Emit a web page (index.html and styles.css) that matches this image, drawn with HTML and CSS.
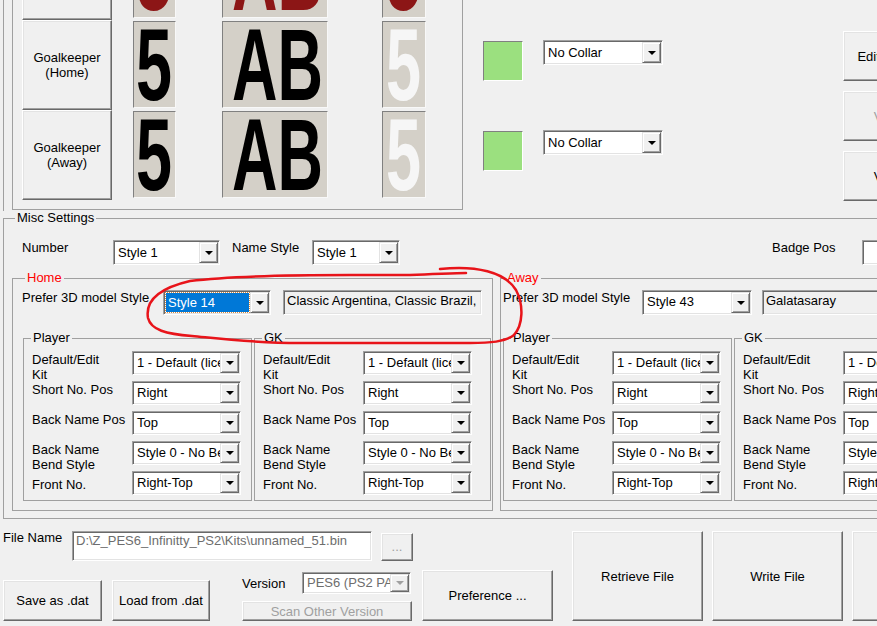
FILE: index.html
```html
<!DOCTYPE html>
<html lang="en">
<head>
  <meta charset="UTF-8">
  <title>Kit Editor</title>
  <link rel="stylesheet" href="styles.css">
</head>
<body>
  <div class="kits">
    <div class="kits-frame">
      <div class="preview">
        <div class="kit-row prev">
          <button class="btn kit-btn">Player<br>(Away)</button>
          <div class="box box-num"><svg width="41" height="85"><text x="2" y="78" textLength="36" lengthAdjust="spacingAndGlyphs">5</text></svg></div>
          <div class="box box-name"><svg width="104" height="85"><text x="9" y="78" textLength="91" lengthAdjust="spacingAndGlyphs">AB</text></svg></div>
          <div class="box box-back"><svg width="42" height="85"><text x="3" y="78" textLength="35" lengthAdjust="spacingAndGlyphs">5</text></svg></div>
        </div>
        <div class="kit-row">
          <button class="btn kit-btn">Goalkeeper<br>(Home)</button>
          <div class="box box-num"><svg width="41" height="85"><text x="2" y="78" textLength="36" lengthAdjust="spacingAndGlyphs">5</text></svg></div>
          <div class="box box-name"><svg width="104" height="85"><text x="9" y="78" textLength="91" lengthAdjust="spacingAndGlyphs">AB</text></svg></div>
          <div class="box box-back white"><svg width="42" height="85"><text x="3" y="78" textLength="35" lengthAdjust="spacingAndGlyphs">5</text></svg></div>
        </div>
        <div class="kit-row">
          <button class="btn kit-btn">Goalkeeper<br>(Away)</button>
          <div class="box box-num"><svg width="41" height="85"><text x="2" y="78" textLength="36" lengthAdjust="spacingAndGlyphs">5</text></svg></div>
          <div class="box box-name"><svg width="104" height="85"><text x="9" y="78" textLength="91" lengthAdjust="spacingAndGlyphs">AB</text></svg></div>
          <div class="box box-back white"><svg width="42" height="85"><text x="3" y="78" textLength="35" lengthAdjust="spacingAndGlyphs">5</text></svg></div>
        </div>
      </div>

      <div class="collars">
        <div class="collar-row">
          <div class="swatch"></div>
          <div class="combo"><span class="combo-text">No Collar</span><span class="combo-btn"></span></div>
        </div>
        <div class="collar-row">
          <div class="swatch"></div>
          <div class="combo"><span class="combo-text">No Collar</span><span class="combo-btn"></span></div>
        </div>
      </div>

      <div class="side-btns">
        <button class="btn">Edit Kit</button>
        <button class="btn off">V</button>
        <button class="btn">V</button>
      </div>
    </div>
  </div>

  <fieldset class="group misc">
    <legend>Misc Settings</legend>
    <div class="misc-row">
      <span class="lbl-number">Number</span>
      <div class="combo w-number"><span class="combo-text">Style 1</span><span class="combo-btn"></span></div>
      <span class="lbl-name">Name Style</span>
      <div class="combo w-name"><span class="combo-text">Style 1</span><span class="combo-btn"></span></div>
      <span class="lbl-badge">Badge Pos</span>
      <div class="combo w-badge"><span class="combo-text"></span></div>
    </div>

    <div class="sides">
      <fieldset class="group home">
        <legend>Home</legend>
        <div class="style-row">
          <span class="style-lbl">Prefer 3D model Style</span>
          <div class="combo w-style"><span class="combo-text sel">Style 14</span><span class="combo-btn"></span></div>
          <div class="field w-teams">Classic Argentina, Classic Brazil,</div>
        </div>
        <div class="players">
          <fieldset class="group sub sub-player">
            <legend>Player</legend>
            <div class="opt-row"><span class="opt-lbl">Default/Edit<br>Kit</span><div class="combo"><span class="combo-text">1 - Default (licensed)</span><span class="combo-btn"></span></div></div>
            <div class="opt-row"><span class="opt-lbl">Short No. Pos</span><div class="combo"><span class="combo-text">Right</span><span class="combo-btn"></span></div></div>
            <div class="opt-row"><span class="opt-lbl">Back Name Pos</span><div class="combo"><span class="combo-text">Top</span><span class="combo-btn"></span></div></div>
            <div class="opt-row"><span class="opt-lbl">Back Name<br>Bend Style</span><div class="combo"><span class="combo-text">Style 0 - No Bend</span><span class="combo-btn"></span></div></div>
            <div class="opt-row"><span class="opt-lbl low">Front No.</span><div class="combo"><span class="combo-text">Right-Top</span><span class="combo-btn"></span></div></div>
          </fieldset>
          <fieldset class="group sub sub-gk">
            <legend>GK</legend>
            <div class="opt-row"><span class="opt-lbl">Default/Edit<br>Kit</span><div class="combo"><span class="combo-text">1 - Default (licensed)</span><span class="combo-btn"></span></div></div>
            <div class="opt-row"><span class="opt-lbl">Short No. Pos</span><div class="combo"><span class="combo-text">Right</span><span class="combo-btn"></span></div></div>
            <div class="opt-row"><span class="opt-lbl">Back Name Pos</span><div class="combo"><span class="combo-text">Top</span><span class="combo-btn"></span></div></div>
            <div class="opt-row"><span class="opt-lbl">Back Name<br>Bend Style</span><div class="combo"><span class="combo-text">Style 0 - No Bend</span><span class="combo-btn"></span></div></div>
            <div class="opt-row"><span class="opt-lbl low">Front No.</span><div class="combo"><span class="combo-text">Right-Top</span><span class="combo-btn"></span></div></div>
          </fieldset>
        </div>
      </fieldset>

      <fieldset class="group away">
        <legend>Away</legend>
        <div class="style-row">
          <span class="style-lbl">Prefer 3D model Style</span>
          <div class="combo w-style"><span class="combo-text">Style 43</span><span class="combo-btn"></span></div>
          <div class="field w-teams">Galatasaray</div>
        </div>
        <div class="players">
          <fieldset class="group sub sub-player">
            <legend>Player</legend>
            <div class="opt-row"><span class="opt-lbl">Default/Edit<br>Kit</span><div class="combo"><span class="combo-text">1 - Default (licensed)</span><span class="combo-btn"></span></div></div>
            <div class="opt-row"><span class="opt-lbl">Short No. Pos</span><div class="combo"><span class="combo-text">Right</span><span class="combo-btn"></span></div></div>
            <div class="opt-row"><span class="opt-lbl">Back Name Pos</span><div class="combo"><span class="combo-text">Top</span><span class="combo-btn"></span></div></div>
            <div class="opt-row"><span class="opt-lbl">Back Name<br>Bend Style</span><div class="combo"><span class="combo-text">Style 0 - No Bend</span><span class="combo-btn"></span></div></div>
            <div class="opt-row"><span class="opt-lbl low">Front No.</span><div class="combo"><span class="combo-text">Right-Top</span><span class="combo-btn"></span></div></div>
          </fieldset>
          <fieldset class="group sub sub-gk">
            <legend>GK</legend>
            <div class="opt-row"><span class="opt-lbl">Default/Edit<br>Kit</span><div class="combo"><span class="combo-text">1 - Default (licensed)</span><span class="combo-btn"></span></div></div>
            <div class="opt-row"><span class="opt-lbl">Short No. Pos</span><div class="combo"><span class="combo-text">Right</span><span class="combo-btn"></span></div></div>
            <div class="opt-row"><span class="opt-lbl">Back Name Pos</span><div class="combo"><span class="combo-text">Top</span><span class="combo-btn"></span></div></div>
            <div class="opt-row"><span class="opt-lbl">Back Name<br>Bend Style</span><div class="combo"><span class="combo-text">Style 0 - No Bend</span><span class="combo-btn"></span></div></div>
            <div class="opt-row"><span class="opt-lbl low">Front No.</span><div class="combo"><span class="combo-text">Right-Top</span><span class="combo-btn"></span></div></div>
          </fieldset>
        </div>
      </fieldset>
    </div>
  </fieldset>

  <div class="bottom">
    <div class="file-col">
      <div class="file-row">
        <span class="file-lbl">File Name</span>
        <div class="file-field">D:\Z_PES6_Infinitty_PS2\Kits\unnamed_51.bin</div>
        <button class="btn off dots-btn">...</button>
      </div>
      <div class="act-row">
        <button class="btn save-btn">Save as .dat</button>
        <button class="btn load-btn">Load from .dat</button>
        <div class="ver">
          <div class="ver-row">
            <span class="ver-lbl">Version</span>
            <div class="combo off"><span class="combo-text">PES6 (PS2 PAL)</span><span class="combo-btn"></span></div>
          </div>
          <button class="btn off scan-btn">Scan Other Version</button>
        </div>
      </div>
    </div>
    <button class="btn pref-btn">Preference ...</button>
    <button class="btn big-btn first">Retrieve File</button>
    <button class="btn big-btn">Write File</button>
    <button class="btn big-btn">Close</button>
  </div>

  <!-- red hand-drawn mark over the screenshot -->
  <svg class="mark" width="877" height="626">
    <path d="M440,269 C476,265 505,272 516,290 C524,305 523,325 514,335 C505,342 490,343 470,343 L300,343 C252,343 222,339 192,336 C166,334 151,330 148,318 C145,300 160,288 190,281 C230,276 300,275 350,275 L410,275 C440,274 455,273 466,273"/>
  </svg>
</body>
</html>
```

FILE: styles.css
```css
* {
  box-sizing: border-box;
}

body {
  margin: 0;
  width: 877px;
  height: 626px;
  overflow: hidden;
  position: relative;
  background: #f0f0f0;
  color: #000;
  font: 13px/15px "Liberation Sans", Arial, sans-serif;
}

/* classic raised button */
.btn {
  font: inherit;
  color: #000;
  background: #f0f0f0;
  border: 1px solid;
  border-color: #fff #696969 #696969 #fff;
  box-shadow: inset -1px -1px #a0a0a0, inset 1px 1px #e3e3e3;
  padding: 0;
  display: flex;
  align-items: center;
  justify-content: center;
  text-align: center;
  flex-shrink: 0;
  white-space: nowrap;
}

.btn.off {
  color: #a0a0a0;
}

/* combo box */
.combo {
  display: flex;
  background: #fff;
  border: 1px solid;
  border-color: #a0a0a0 #fff #fff #a0a0a0;
  box-shadow: inset 1px 1px #696969, inset -1px -1px #e3e3e3;
  padding: 1px;
  flex-shrink: 0;
  width: 109px;
  height: 24px;
}

.combo-text {
  flex: 1;
  min-width: 0;
  padding-left: 3px;
  overflow: hidden;
  white-space: nowrap;
  line-height: 20px;
}

.combo-text.sel {
  margin: 1px;
  padding-left: 2px;
  background: #0078d7;
  color: #fff;
  line-height: 19px;
  outline: 1px dotted #d8883a;
}

.combo-btn {
  width: 19px;
  flex-shrink: 0;
  background: #f0f0f0;
  border: 1px solid;
  border-color: #e3e3e3 #696969 #696969 #e3e3e3;
  box-shadow: inset 1px 1px #fff, inset -1px -1px #a0a0a0;
  display: flex;
  align-items: center;
  justify-content: center;
}

.combo-btn::after {
  content: "";
  border-left: 4px solid transparent;
  border-right: 4px solid transparent;
  border-top: 4px solid #000;
}

.combo.off .combo-text {
  color: #6d6d6d;
}

.combo.off .combo-btn::after {
  border-top-color: #a0a0a0;
}

.field {
  height: 25px;
  flex-shrink: 0;
  background: #f0f0f0;
  border: 1px solid;
  border-color: #a0a0a0 #fff #fff #a0a0a0;
  box-shadow: inset 1px 1px #696969, inset -1px -1px #e3e3e3;
  padding-left: 3px;
  line-height: 19px;
  white-space: nowrap;
  overflow: hidden;
}

/* top kit preview */
.kits {
  height: 211px;
  display: flex;
  padding-left: 3px;
  overflow: hidden;
}

.kits-frame {
  flex: 1;
  display: flex;
  align-items: flex-start;
  height: 212px;
  border-left: 1px solid #a0a0a0;
  padding-left: 8px;
}

.kits-frame > * {
  flex-shrink: 0;
}

.preview {
  width: 451px;
  height: 210px;
  border: 1px solid #a0a0a0;
  border-top: 0;
  display: flex;
  flex-direction: column;
  justify-content: flex-end;
  padding: 0 0 9px 9px;
  overflow: hidden;
}

.kit-row {
  display: flex;
  align-items: flex-start;
  height: 90px;
  flex-shrink: 0;
}

.kit-btn {
  width: 90px;
  height: 90px;
  white-space: normal;
}

.box {
  margin-top: 1px;
  height: 87px;
  flex-shrink: 0;
  background: #d4d0c8;
  border: 1px solid;
  border-color: #808080 #f8f8f8 #f8f8f8 #808080;
}

.box svg {
  display: block;
}

.box text {
  font: bold 102px "Liberation Sans", Arial, sans-serif;
  fill: #000;
}

.box.white text {
  fill: #f6f6f6;
}

.prev .box text {
  fill: #8c1616;
}

.box-num {
  margin-left: 21px;
  width: 43px;
}

.box-name {
  margin-left: 46px;
  width: 106px;
}

.box-back {
  margin-left: 54px;
  width: 44px;
}

.collars {
  margin-left: 20px;
  padding-top: 40px;
  display: flex;
  flex-direction: column;
}

.collar-row {
  display: flex;
  align-items: flex-start;
  height: 90px;
}

.swatch {
  width: 40px;
  height: 40px;
  margin-top: 1px;
  flex-shrink: 0;
  background: #9be07f;
  border: 1px solid;
  border-color: #808080 #fff #fff #808080;
}

.collar-row .combo {
  margin-left: 20px;
  width: 120px;
  height: 25px;
}

.collar-row .combo-text {
  line-height: 21px;
}

.side-btns {
  margin-left: 180px;
  padding-top: 31px;
  display: flex;
  flex-direction: column;
  gap: 10px;
}

.side-btns .btn {
  width: 70px;
  height: 50px;
}

/* group boxes */
.group {
  margin: 0;
  padding: 0;
  min-width: 0;
  flex-shrink: 0;
  border: 1px solid #a0a0a0;
}

.group > legend {
  padding: 0 2px;
  line-height: 14px;
}

.misc {
  margin-left: 3px;
  width: 900px;
  padding: 15px 0 7px 0;
}

.misc > legend {
  margin-left: 11px;
}

.misc-row {
  display: flex;
  align-items: flex-start;
  height: 25px;
  padding-left: 18px;
}

.misc-row > * {
  flex-shrink: 0;
  white-space: nowrap;
}

.misc-row .combo {
  height: 25px;
}

.misc-row .combo-text {
  line-height: 21px;
}

.lbl-number {
  width: 91px;
}

.w-number {
  width: 107px;
}

.lbl-name {
  margin-left: 12px;
  width: 80px;
}

.w-name {
  width: 88px;
}

.lbl-badge {
  margin-left: 372px;
  width: 90px;
}

.w-badge {
  width: 100px;
}

.sides {
  display: flex;
  align-items: flex-start;
  margin-top: 6px;
  padding-left: 8px;
}

.home {
  width: 481px;
  padding: 5px 0 9px 0;
}

.home > legend {
  margin-left: 12px;
  color: #ff0000;
}

.away {
  margin-left: 7px;
  width: 500px;
  padding: 5px 0 9px 0;
}

.away > legend {
  margin-left: 4px;
  color: #ff0000;
}

.style-row {
  display: flex;
  align-items: flex-start;
  height: 25px;
}

.home .style-row {
  padding-left: 9px;
}

.away .style-row {
  padding-left: 2px;
}

.style-lbl {
  width: 141px;
  flex-shrink: 0;
  white-space: nowrap;
}

.away .style-lbl {
  width: 139px;
}

.w-style {
  width: 108px;
  height: 25px;
}

.away .w-style {
  width: 110px;
}

.w-teams {
  margin-left: 12px;
  width: 199px;
}

.away .w-teams {
  margin-left: 10px;
  width: 200px;
}

.players {
  display: flex;
  align-items: flex-start;
  gap: 2px;
  margin-top: 16px;
}

.home .players {
  padding-left: 10px;
}

.away .players {
  padding-left: 2px;
}

.sub {
  padding: 6px 0 5px 0;
}

.sub > legend {
  margin-left: 7px;
}

.sub-player {
  width: 229px;
}

.sub-gk {
  width: 237px;
}

.opt-row {
  display: flex;
  align-items: flex-start;
  height: 24px;
  padding-left: 8px;
}

.opt-row + .opt-row {
  margin-top: 6px;
}

.opt-lbl {
  width: 100px;
  flex-shrink: 0;
  padding-top: 1px;
  white-space: nowrap;
}

.opt-lbl.low {
  padding-top: 6px;
}

/* bottom bar */
.bottom {
  display: flex;
  align-items: flex-start;
  padding: 12px 0 0 3px;
}

.bottom > * {
  flex-shrink: 0;
}

.file-col {
  width: 410px;
}

.file-row {
  display: flex;
  align-items: flex-start;
  height: 30px;
}

.file-row > * {
  flex-shrink: 0;
}

.file-lbl {
  width: 69px;
  margin-top: -1px;
}

.file-field {
  width: 300px;
  height: 30px;
  background: #fff;
  color: #6d6d6d;
  border: 1px solid;
  border-color: #a0a0a0 #fff #fff #a0a0a0;
  box-shadow: inset 1px 1px #696969, inset -1px -1px #e3e3e3;
  padding: 1px 0 0 3px;
  white-space: nowrap;
  overflow: hidden;
}

.dots-btn {
  margin-left: 9px;
  margin-top: 2px;
  width: 32px;
  height: 28px;
  align-items: flex-end;
  padding-bottom: 6px;
}

.act-row {
  display: flex;
  align-items: flex-start;
  margin-top: 11px;
}

.save-btn {
  margin-top: 8px;
  width: 99px;
  height: 41px;
}

.load-btn {
  margin: 8px 0 0 10px;
  width: 98px;
  height: 41px;
}

.ver {
  margin-left: 32px;
  flex-shrink: 0;
}

.ver-row {
  display: flex;
  align-items: flex-start;
}

.ver-lbl {
  width: 60px;
  padding-top: 4px;
  flex-shrink: 0;
}

.ver .combo {
  width: 109px;
  height: 22px;
}

.ver .combo-text {
  line-height: 18px;
}

.scan-btn {
  margin-top: 7px;
  width: 170px;
  height: 20px;
}

.pref-btn {
  margin: 39px 0 0 9px;
  width: 131px;
  height: 51px;
}

.big-btn {
  margin-left: 9px;
  width: 131px;
  height: 90px;
}

.big-btn.first {
  margin-left: 19px;
}

.mark {
  position: absolute;
  left: 0;
  top: 0;
  pointer-events: none;
}

.mark path {
  fill: none;
  stroke: #e8141a;
  stroke-width: 2.5;
  stroke-linecap: round;
}
```
